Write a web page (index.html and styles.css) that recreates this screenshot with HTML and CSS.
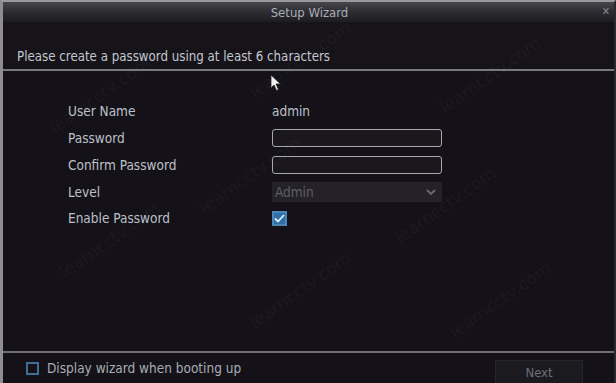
FILE: index.html
```html
<!DOCTYPE html>
<html>
<head>
<meta charset="utf-8">
<link rel="stylesheet" href="styles.css">
</head>
<body>
<div class="window">
  <div class="titlebar">
    <span class="title">Setup Wizard</span>
    <span class="close">&#x2715;</span>
  </div>
  <div class="message">Please create a password using at least 6 characters</div>
  <div class="content">
    <div class="form">
      <div class="label">User Name</div><div class="value">admin</div>
      <div class="label">Password</div><div class="value"><div class="input"></div></div>
      <div class="label">Confirm Password</div><div class="value"><div class="input"></div></div>
      <div class="label">Level</div><div class="value"><div class="select"><span>Admin</span>
        <svg class="chev" width="10" height="6" viewBox="0 0 10 6"><path d="M1 1 L5 5 L9 1" fill="none" stroke="#6a6a72" stroke-width="1.8"/></svg></div></div>
      <div class="label">Enable Password</div><div class="value"><div class="check on">
        <svg width="11" height="9" viewBox="0 0 11 9"><path d="M1 4.5 L4 7.5 L10 1" fill="none" stroke="#e6eef6" stroke-width="1.8"/></svg></div></div>
    </div>
  </div>
  <div class="footer">
    <div class="boot"><div class="check small"></div><span>Display wizard when booting up</span></div>
    <div class="next">Next</div>
  </div>
</div>
<svg class="cursor" width="12" height="18" viewBox="0 0 12 18"><path d="M1 1 L1 14 L4 11 L6.5 16.5 L8.5 15.5 L6 10 L10.5 10 Z" fill="#f2f2f2" stroke="#222" stroke-width="0.8"/></svg>
<div class="wm" style="left:100px;top:95px">learncctv.com</div>
<div class="wm" style="left:300px;top:60px">learncctv.com</div>
<div class="wm" style="left:490px;top:75px">learncctv.com</div>
<div class="wm" style="left:250px;top:175px">learncctv.com</div>
<div class="wm" style="left:445px;top:205px">learncctv.com</div>
<div class="wm" style="left:110px;top:240px">learncctv.com</div>
<div class="wm" style="left:300px;top:290px">learncctv.com</div>
<div class="wm" style="left:500px;top:300px">learncctv.com</div>
</body>
</html>
```
FILE: styles.css
```css
html, body {
  margin: 0;
  padding: 0;
  background: #141218;
}
body {
  width: 616px;
  height: 383px;
  overflow: hidden;
  position: relative;
  font-family: "DejaVu Sans Condensed", "DejaVu Sans", sans-serif;
  color: #c6c9d0;
}
.window {
  box-sizing: border-box;
  height: 383px;
  border-left: 3px solid #8e8e92;
  border-top: 2px solid #9a9a9e;
  border-right: 2px solid #2a2a2e;
  display: flex;
  flex-direction: column;
}
.titlebar {
  height: 20px;
  background: linear-gradient(#46464b, #2c2c31 50%, #1d1d21);
  display: flex;
  align-items: center;
  justify-content: center;
  position: relative;
}
.title {
  font-size: 13px;
  color: #a9adb8;
  margin-left: 2px;
}
.close {
  position: absolute;
  right: 4px;
  top: 3px;
  font-size: 11px;
  color: #8a8a90;
}
.message {
  height: 49px;
  box-sizing: border-box;
  padding: 27px 0 0 14px;
  font-size: 13.2px;
  color: #c3c7d0;
  border-bottom: 2px solid #7a7a7e;
  background: #161419;
}
.content {
  flex: 1;
}
.form {
  display: grid;
  grid-template-columns: 204px 170px;
  grid-auto-rows: 26.75px;
  padding: 27px 0 0 65px;
  align-items: center;
}
.label {
  font-size: 13.5px;
  color: #bcc0c8;
}
.value {
  font-size: 13.5px;
  color: #bcc0c8;
  display: flex;
  align-items: center;
}
.input {
  box-sizing: border-box;
  width: 170px;
  height: 18px;
  border: 1.5px solid #a8a8ac;
  border-radius: 3px;
  background: #1a181d;
}
.select {
  box-sizing: border-box;
  width: 170px;
  height: 20px;
  background: #242228;
  display: flex;
  align-items: center;
  justify-content: space-between;
  padding: 0 6px 0 3px;
  color: #5e5e66;
  font-size: 13.5px;
}
.check {
  box-sizing: border-box;
  width: 15px;
  height: 15px;
  border: 2px solid #4a86b8;
  display: flex;
  align-items: center;
  justify-content: center;
}
.check.on {
  background: #2d6fa6;
}
.check.small {
  width: 13px;
  height: 13px;
  border-color: #3f6f96;
  background: transparent;
}
.footer {
  height: 30px;
  border-top: 2px solid #6e6e72;
  display: flex;
  align-items: center;
  justify-content: space-between;
  padding: 0 31px 0 23px;
}
.boot {
  display: flex;
  align-items: center;
  gap: 8px;
  font-size: 13.5px;
  color: #a8acb4;
}
.next {
  width: 86px;
  height: 23px;
  margin-top: 9px;
  background: #1b1a1f;
  border: 1px solid #26252a;
  display: flex;
  align-items: center;
  justify-content: center;
  font-size: 13px;
  color: #6e7078;
}
.cursor {
  position: absolute;
  left: 270px;
  top: 74px;
}
.wm {
  position: absolute;
  font-family: "DejaVu Sans", sans-serif;
  font-size: 17px;
  line-height: 20px;
  color: rgba(255, 255, 255, 0.045);
  transform: translate(-50%, -50%) rotate(-35deg);
  white-space: nowrap;
  pointer-events: none;
}
```
